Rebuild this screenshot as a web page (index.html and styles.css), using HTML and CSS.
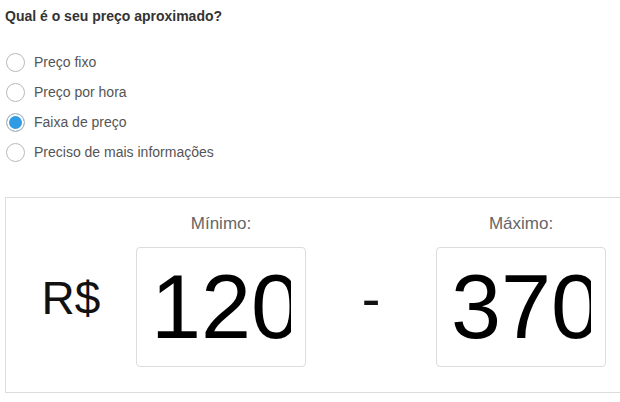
FILE: index.html
```html
<!DOCTYPE html>
<html lang="pt-BR">
<head>
  <meta charset="UTF-8">
  <meta name="viewport" content="width=device-width, initial-scale=1.0">
  <title>Preço aproximado</title>
  <link rel="stylesheet" href="styles.css">
</head>
<body>
  <div class="page">
    <h3 class="question">Qual é o seu preço aproximado?</h3>

    <ul class="options">
      <li class="option"><span class="radio"></span>Preço fixo</li>
      <li class="option"><span class="radio"></span>Preço por hora</li>
      <li class="option"><span class="radio checked"></span>Faixa de preço</li>
      <li class="option"><span class="radio"></span>Preciso de mais informações</li>
    </ul>

    <div class="range">
      <div class="currency">R$</div>
      <div class="field">
        <label class="field-label">Mínimo:</label>
        <input class="amount" type="text" value="120">
      </div>
      <div class="dash">-</div>
      <div class="field">
        <label class="field-label">Máximo:</label>
        <input class="amount" type="text" value="370">
      </div>
    </div>
  </div>
</body>
</html>
```

FILE: styles.css
```css
body {
  margin: 0;
  padding: 0;
  font-family: "Liberation Sans", Arial, sans-serif;
  background-color: #fff;
}

.page {
  padding: 0 0 0 5px;
}

.question {
  margin: 9px 0 0;
  font-size: 14px;
  line-height: 15px;
  font-weight: bold;
  color: #333;
}

.options {
  list-style: none;
  margin: 23px 0 0;
  padding: 0;
}

.option {
  display: flex;
  align-items: center;
  height: 30px;
  font-size: 14px;
  color: #555;
}

.radio {
  box-sizing: border-box;
  width: 19px;
  height: 19px;
  margin: 0 9px 0 1px;
  border: 1px solid #b9b9b9;
  border-radius: 50%;
  background-color: #fff;
}

.radio.checked {
  background-color: #2f9be4;
  box-shadow: inset 0 0 0 2px #fff;
}

.range {
  box-sizing: border-box;
  display: flex;
  align-items: flex-end;
  width: 615px;
  margin-top: 30px;
  padding: 16px 0 25px;
  border: 1px solid #dcdcdc;
  border-right: none;
}

.currency,
.dash {
  box-sizing: border-box;
  display: flex;
  align-items: center;
  justify-content: center;
  width: 130px;
  height: 120px;
  padding-bottom: 18px;
  color: #111;
}

.currency {
  font-size: 46px;
}

.dash {
  font-size: 56px;
}

.field {
  display: flex;
  flex-direction: column;
  width: 170px;
}

.field-label {
  height: 20px;
  margin-bottom: 13px;
  font-size: 17px;
  line-height: 20px;
  color: #666;
  text-align: center;
}

.amount {
  box-sizing: border-box;
  width: 170px;
  height: 120px;
  padding: 0 14px;
  border: 1px solid #dcdcdc;
  border-radius: 4px;
  font-family: "Liberation Sans", Arial, sans-serif;
  font-size: 90px;
  color: #000;
  background-color: #fff;
  outline: none;
}
```
